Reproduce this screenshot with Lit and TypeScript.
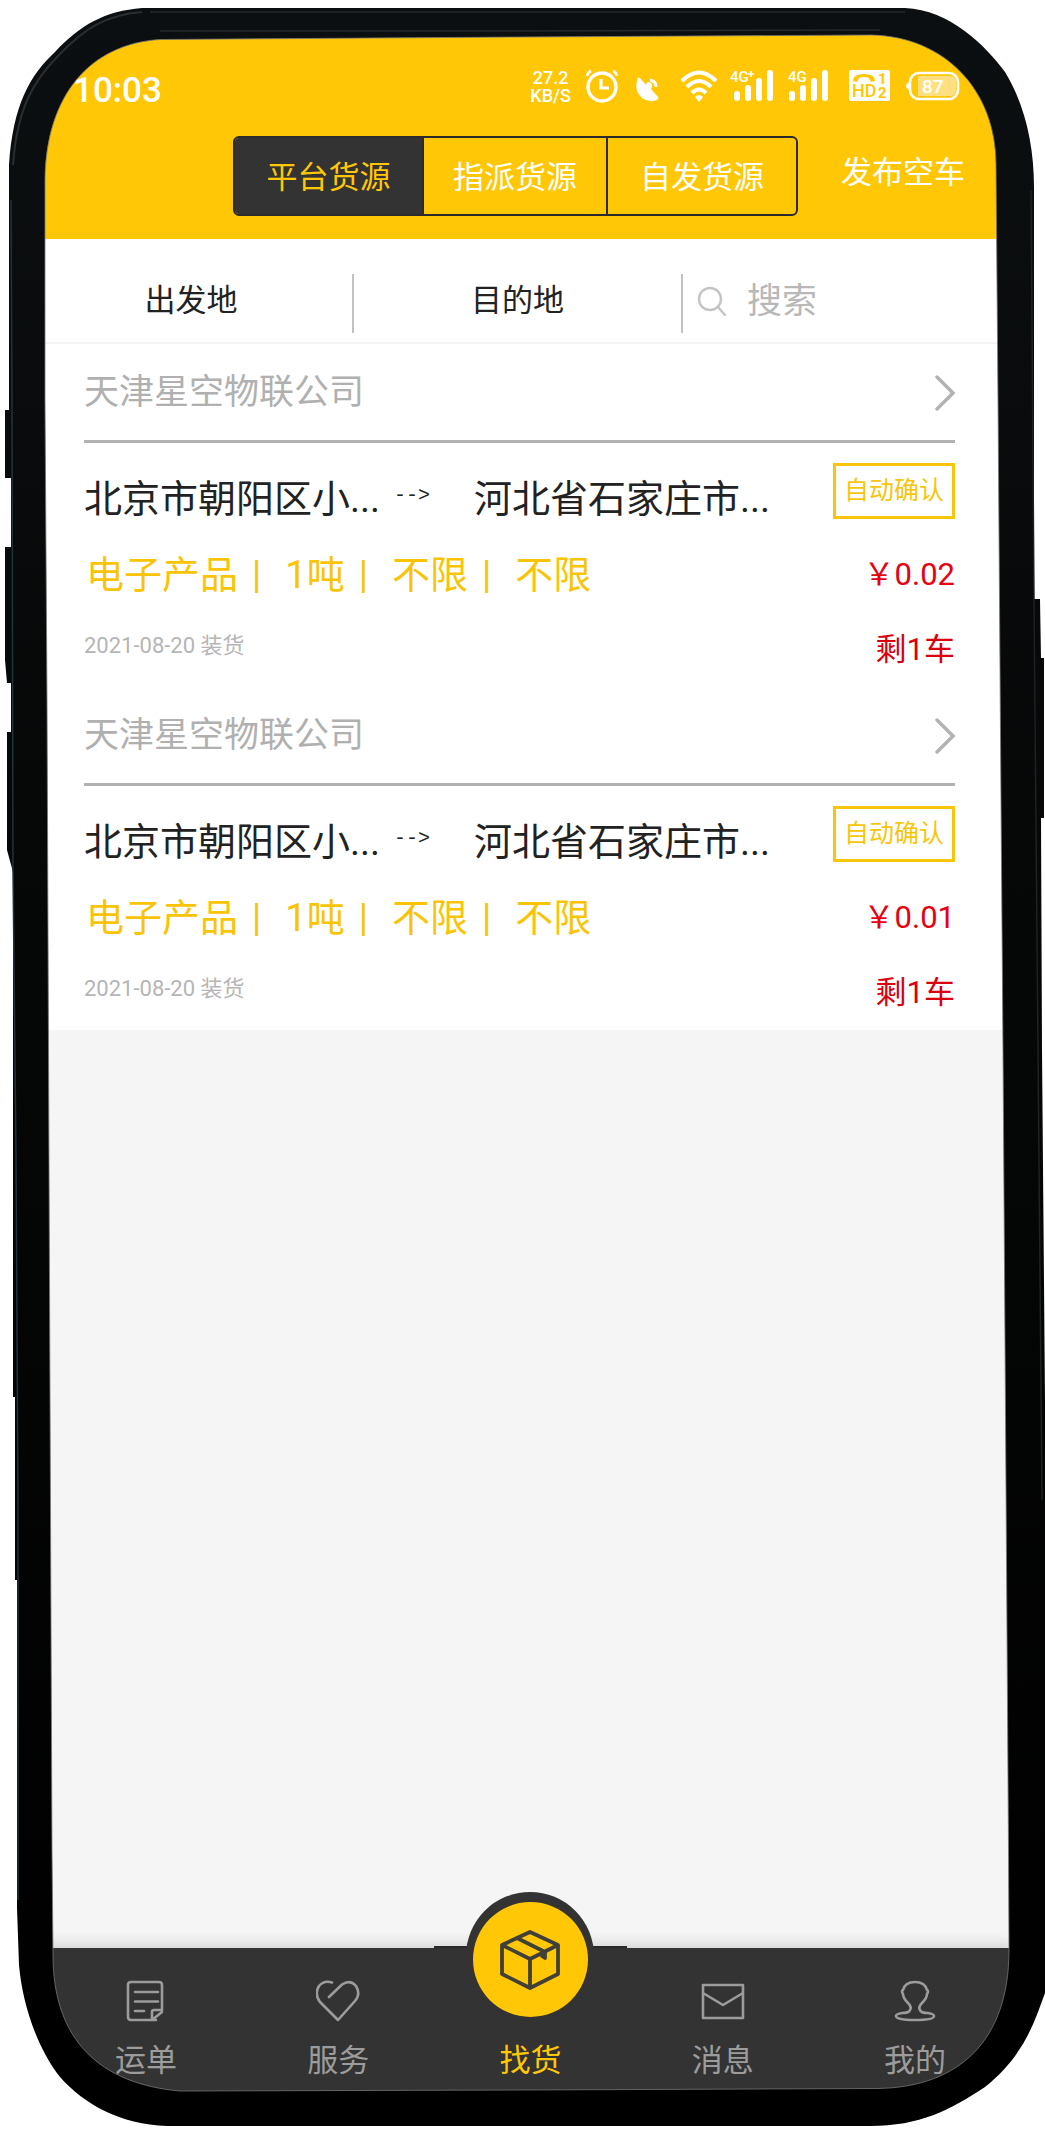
import { LitElement, html, svg, css } from "lit";
import { customElement, state } from "lit/decorators.js";
import { classMap } from "lit/directives/class-map.js";

interface Shipment {
  company: string;
  from: string;
  to: string;
  tag: string;
  specs: string[];
  date: string;
  price: string;
  left: string;
}

const SHIPMENTS: Shipment[] = [
  {
    company: "天津星空物联公司",
    from: "北京市朝阳区小...",
    to: "河北省石家庄市...",
    tag: "自动确认",
    specs: ["电子产品", "1吨", "不限", "不限"],
    date: "2021-08-20 装货",
    price: "￥0.02",
    left: "剩1车",
  },
  {
    company: "天津星空物联公司",
    from: "北京市朝阳区小...",
    to: "河北省石家庄市...",
    tag: "自动确认",
    specs: ["电子产品", "1吨", "不限", "不限"],
    date: "2021-08-20 装货",
    price: "￥0.01",
    left: "剩1车",
  },
];

const SOURCES = ["平台货源", "指派货源", "自发货源"];

const FONT = css`Roboto, "Noto Sans CJK SC", sans-serif`;

@customElement("status-bar")
export class StatusBar extends LitElement {
  static styles = css`
    :host {
      display: flex;
      align-items: center;
      justify-content: space-between;
      height: 60px;
      padding: 0 55px 0 33px;
      color: #fff;
      font-family: ${FONT};
    }
    .time {
      font-size: 35px;
      line-height: 42px;
      font-weight: 500;
      padding-top: 10px;
    }
    .icons {
      display: flex;
      align-items: center;
      gap: 12px;
    }
    .speed {
      display: flex;
      flex-direction: column;
      align-items: center;
      font-size: 18px;
      line-height: 18px;
      font-weight: 500;
      padding: 2px 3px 0 0;
    }
    svg {
      display: block;
    }
    .net {
      font-size: 15px;
      font-weight: 500;
    }
    .hd {
      font-size: 18px;
      font-weight: 500;
    }
    .sim {
      font-size: 15px;
      font-weight: 700;
    }
    .charge {
      font-size: 19px;
      font-weight: 500;
    }
  `;

  render() {
    return html`
      <span class="time">10:03</span>
      <div class="icons">
        <span class="speed"><span>27.2</span><span>KB/S</span></span>
        <svg width="36" height="34" viewBox="0 0 36 34" fill="none" stroke="#fff" aria-hidden="true">
          <circle cx="16" cy="18" r="14" stroke-width="3.4" />
          <path d="M15 10v9h8" stroke-width="3.2" />
          <path d="M1 7Q2 3 5 2M27 2q3 1 4 5" stroke-width="2.6" />
        </svg>
        <svg width="34" height="34" viewBox="0 0 34 34" fill="#fff" aria-hidden="true">
          <path d="M4 9q1-1 2 0l6 7q0-3 3-3 4 1 3 5l-1 2 7 8q1 2-1 3-8 3-15-2Q-1 21 4 9z" />
          <path d="M16 11q6 1 6 7" fill="none" stroke="#fff" stroke-width="3" />
        </svg>
        <svg width="38" height="34" viewBox="0 0 38 34" fill="none" stroke="#fff" stroke-width="4" aria-hidden="true">
          <path d="M2 12Q19-5 36 12" />
          <path d="M7 18Q19 6 31 18" />
          <path d="M12 24Q19 17 26 24" />
          <path d="M15 28q4-4 8 0l-4 5z" fill="#fff" stroke="none" />
        </svg>
        <svg width="46" height="34" viewBox="0 0 46 34" fill="#fff" aria-hidden="true">
          <text class="net" x="0" y="13">4G</text>
          <path d="M21 2v6M18 5h6" stroke="#fff" stroke-width="1.6" />
          <rect x="4" y="22" width="6" height="10" rx="3" />
          <rect x="15" y="16" width="6" height="16" rx="3" />
          <rect x="26" y="9" width="6" height="23" rx="3" />
          <rect x="37" y="1" width="6" height="31" rx="3" />
        </svg>
        <svg width="49" height="34" viewBox="0 0 49 34" fill="#fff" aria-hidden="true">
          <text class="net" x="0" y="13">4G</text>
          <rect x="1" y="22" width="6" height="10" rx="3" />
          <rect x="12" y="16" width="6" height="16" rx="3" />
          <rect x="23" y="9" width="6" height="23" rx="3" />
          <rect x="34" y="1" width="6" height="31" rx="3" />
        </svg>
        <svg width="45" height="34" viewBox="0 0 45 34" fill="#ffc706" aria-hidden="true">
          <rect x="0" y="1" width="41" height="31" rx="2" fill="#fff" />
          <path d="M4 12q0-7 11-7t11 7l-4 1-2-4q-5-2-10 0l-2 4z" />
          <text class="hd" x="3" y="28">HD</text>
          <text class="sim" x="29" y="15">1</text>
          <text class="sim" x="29" y="29">2</text>
        </svg>
        <svg width="54" height="34" viewBox="0 0 54 34" aria-hidden="true">
          <path d="M4 12Q0 15 0 17t4 5z" fill="#fff" />
          <rect x="4" y="4" width="48" height="26" rx="9" fill="none" stroke="#fff" stroke-width="2.6" />
          <path d="M12 7h34q4 1 4 6v8q0 5-4 6H12z" fill="#ffdf80" />
          <text class="charge" x="16" y="24" fill="#fff">87</text>
        </svg>
      </div>
    `;
  }
}

@customElement("shipment-card")
export class ShipmentCard extends LitElement {
  static properties = { item: { attribute: false } };
  declare item: Shipment;

  static styles = css`
    :host {
      display: block;
      padding: 0 60px 4px 44px;
      background: #fff;
      font-family: ${FONT};
    }
    .head {
      display: flex;
      align-items: center;
      justify-content: space-between;
      box-sizing: border-box;
      height: 99px;
      padding-top: 2px;
      border-bottom: 3px solid #b2b2b2;
      color: #b0b0b0;
      font-size: 35px;
      line-height: 40px;
      text-decoration: none;
    }
    .row {
      display: flex;
      align-items: center;
      justify-content: space-between;
    }
    .route {
      height: 72px;
      margin-top: 20px;
      color: #222;
    }
    .places {
      display: flex;
      align-items: center;
      font-size: 38px;
      line-height: 44px;
      white-space: nowrap;
    }
    .arrow {
      font-family: "Liberation Mono", monospace;
      font-size: 20px;
      line-height: 24px;
      padding: 0 44px 6px 14px;
    }
    .tag {
      align-self: flex-start;
      box-sizing: border-box;
      height: 56px;
      padding: 0 8px;
      border: 3px solid #f7c50c;
      color: #f7c50c;
      font-size: 25px;
      line-height: 50px;
    }
    .info {
      height: 82px;
    }
    .specs {
      display: flex;
      color: #f9c406;
      font-size: 38px;
      line-height: 44px;
      margin: 0;
      padding: 0 0 2px 2px;
      list-style: none;
    }
    .spec:not(:last-child)::after {
      content: "|";
      padding: 0 24px 0 14px;
    }
    .price {
      color: #e60012;
      font-size: 31px;
      line-height: 40px;
      padding-bottom: 2px;
    }
    .foot {
      height: 66px;
    }
    .date {
      color: #b5b5b5;
      font-size: 22px;
      line-height: 28px;
      padding-bottom: 8px;
    }
    .left {
      color: #d8000f;
      font-size: 31px;
      line-height: 36px;
    }
  `;

  render() {
    const s = this.item;
    return html`
      <a class="head" href="#detail">
        <span>${s.company}</span>
        <svg width="20" height="36" viewBox="0 0 20 36" fill="none" stroke="#b2b2b2" stroke-width="3.4" stroke-linecap="round" aria-hidden="true">
          <path d="M2 2l16 16L2 34" />
        </svg>
      </a>
      <div class="row route">
        <div class="places">
          <span>${s.from}</span><span class="arrow">--&gt;</span><span>${s.to}</span>
        </div>
        <span class="tag">${s.tag}</span>
      </div>
      <div class="row info">
        <ul class="specs">
          ${s.specs.map((x) => html`<li class="spec">${x}</li>`)}
        </ul>
        <span class="price">${s.price}</span>
      </div>
      <div class="row foot">
        <span class="date">${s.date}</span>
        <span class="left">${s.left}</span>
      </div>
    `;
  }
}

const TAB_ICONS = {
  orders: svg`<path d="M32 40H7q-3 0-3-3V5q0-3 3-3h28q3 0 3 3v25h-8q-2 0-2 2v8l10-8M11 12h23M11 21.500h23M11 31h9" />`,
  service: svg`<path d="M13 17L26 4.500Q34-1 40 6q5 8-1 15L22 40 4 22Q-2 14 3 6 8 0 16 2.500" />`,
  messages: svg`<path d="M2 5h40v33H2zM2 13l20 12 20-12" />`,
  mine: svg`<path d="M17 30q2-3-2-7-5-5-5-9-2-3 0-4Q12 2 22 2t12 8q2 1 0 4 0 4-5 9-4 4-2 7 1 3 8 3 6 1 6 3 0 4-19 4T3 36q0-2 6-3 7 0 8-3z" />`,
};

@customElement("tab-bar")
export class TabBar extends LitElement {
  static styles = css`
    :host {
      display: block;
      background: #333;
      box-shadow: 0 -3px 14px rgba(0, 0, 0, 0.16);
      font-family: ${FONT};
    }
    .tabs {
      display: grid;
      grid-template-columns: repeat(5, 1fr);
      grid-template-rows: 148px;
      padding: 0 4px 0 10px;
    }
    .tab {
      display: flex;
      flex-direction: column;
      align-items: center;
      justify-content: flex-end;
      gap: 20px;
      min-height: 0;
      padding-bottom: 17px;
      box-sizing: border-box;
      color: #9c9c9c;
      font-size: 31px;
      line-height: 36px;
      text-decoration: none;
    }
    .main {
      position: relative;
      gap: 23px;
      color: #ffc706;
    }
    .main::before {
      content: "";
      position: absolute;
      top: -2px;
      left: 0;
      right: 0;
      height: 2px;
      background: #2a2a2a;
    }
    .bump {
      position: relative;
      display: flex;
      flex: none;
      justify-content: center;
      box-sizing: border-box;
      width: 128px;
      height: 128px;
      padding-top: 10px;
      border-radius: 50%;
      background: #333;
    }
    .disc {
      display: flex;
      align-items: center;
      justify-content: center;
      width: 115px;
      height: 115px;
      border-radius: 50%;
      background: #ffc706;
    }
  `;

  private tab(label: string, icon: unknown) {
    return html`<a class="tab" href="#tab">
      <svg width="44" height="44" viewBox="0 0 44 42" fill="none" stroke="#9c9c9c" stroke-width="2.600" stroke-linecap="round" stroke-linejoin="round" aria-hidden="true">${icon}</svg>
      <span>${label}</span>
    </a>`;
  }

  render() {
    return html`
      <nav class="tabs">
        ${this.tab("运单", TAB_ICONS.orders)} ${this.tab("服务", TAB_ICONS.service)}
        <a class="tab main" href="#tab" aria-current="page">
          <span class="bump"
            ><span class="disc">
              <svg width="60" height="60" viewBox="0 0 60 60" fill="none" stroke="#404038" stroke-width="3.800" stroke-linejoin="round" aria-hidden="true">
                <path d="M30 2l28 13v29L30 58 2 44V15zM2 15l28 14 28-14M30 29v29M17 8l28 14v6l-3-2v-3" />
              </svg> </span
          ></span>
          <span>找货</span>
        </a>
        ${this.tab("消息", TAB_ICONS.messages)} ${this.tab("我的", TAB_ICONS.mine)}
      </nav>
    `;
  }
}

@customElement("app-root")
export class AppRoot extends LitElement {
  @state() private source = 0;

  static styles = css`
    :host {
      display: flex;
      position: relative;
      box-sizing: border-box;
      min-height: 100vh;
      padding: 30px 30px 34px 40px;
      background: #fff;
      font-family: ${FONT};
    }
    .screen {
      display: flex;
      flex-direction: column;
      flex: 1;
      min-width: 0;
      border-radius: 110px;
      overflow: hidden;
      background: #f5f5f5;
    }
    .bezel {
      position: absolute;
      inset: 0;
      width: 100%;
      height: 100%;
      pointer-events: none;
    }
    .header {
      background: #ffc706;
      padding: 26px 0 23px;
    }
    .bar {
      display: flex;
      justify-content: flex-end;
      gap: 43px;
      margin-top: 20px;
      padding-right: 50px;
    }
    .sources {
      display: grid;
      grid-template-columns: 187px 184px 190px;
      height: 80px;
      box-sizing: border-box;
      border: 2px solid #2b2b2b;
      border-radius: 6px;
      overflow: hidden;
    }
    button {
      border: 0;
      background: none;
      font: inherit;
      padding: 0;
      color: inherit;
    }
    .source {
      color: #fff;
      font-size: 31px;
      line-height: 36px;
      padding-top: 4px;
    }
    .source + .source {
      border-left: 2px solid #2b2b2b;
    }
    .source.on {
      background: #333;
      color: #ffc706;
    }
    .publish {
      color: #fff;
      font-size: 31px;
      line-height: 36px;
      padding-bottom: 6px;
    }
    .filters {
      display: grid;
      grid-template-columns: 312fr 2px 327fr 2px 332fr;
      align-items: center;
      height: 83px;
      padding-top: 20px;
      background: #fff;
      border-bottom: 2px solid #f4f4f4;
    }
    .filter {
      color: #222;
      font-size: 31px;
      line-height: 36px;
    }
    .filter:first-child {
      padding-right: 10px;
    }
    .rule {
      height: 59px;
      background: #c2c2c2;
      margin-top: 6px;
    }
    .search {
      display: flex;
      align-items: center;
      gap: 20px;
      padding-left: 14px;
      min-width: 0;
    }
    .query {
      flex: 1;
      min-width: 0;
      border: 0;
      padding: 2px 0 0;
      background: none;
      font: inherit;
      font-size: 35px;
      line-height: 42px;
      color: #222;
      outline: none;
    }
    .query::placeholder {
      color: #b8b8b8;
      opacity: 1;
    }
    .list {
      flex: 1;
    }
  `;

  render() {
    return html`
      <main class="screen">
        <header class="header">
          <status-bar></status-bar>
          <div class="bar">
            <div class="sources">
              ${SOURCES.map(
                (name, i) => html`<button
                  class=${classMap({ source: true, on: this.source === i })}
                  aria-pressed=${this.source === i}
                  @click=${() => (this.source = i)}
                >
                  ${name}
                </button>`
              )}
            </div>
            <button class="publish">发布空车</button>
          </div>
        </header>
        <div class="filters">
          <button class="filter">出发地</button>
          <span class="rule"></span>
          <button class="filter">目的地</button>
          <span class="rule"></span>
          <label class="search">
            <svg width="30" height="30" viewBox="0 0 30 30" fill="none" stroke="#c4c4c4" stroke-width="2.400" stroke-linecap="round" aria-hidden="true">
              <circle cx="13" cy="13" r="11" />
              <path d="M21 21l7 8" />
            </svg>
            <input class="query" type="search" placeholder="搜索" aria-label="搜索" />
          </label>
        </div>
        <section class="list">
          ${SHIPMENTS.map((s) => html`<shipment-card .item=${s}></shipment-card>`)}
        </section>
        <tab-bar></tab-bar>
      </main>
      ${this.bezel()}
    `;
  }

  private bezel() {
    const hole =
      "M160 39.500L522 37 872 35C945 37 996 90 996 165L998 400 1001 800 1003 1050 1008.500 1850 1009 1950C1009 2040 960 2087 878 2088.500L522 2090 180 2091C100 2084 53 2040 53 1955L52 1850 48.500 1050 47 700 45 400V180C46 95 90 44 160 39.500Z";
    return html`
      <svg class="bezel" viewBox="0 0 1045 2130" preserveAspectRatio="none" aria-hidden="true">
        <defs>
          <linearGradient id="body" x1="0" y1="0" x2="0" y2="1">
            <stop offset="0" stop-color="#0c0f11" />
            <stop offset="0.400" stop-color="#060707" />
            <stop offset="1" stop-color="#000" />
          </linearGradient>
        </defs>
        <path
          fill="url(#body)"
          fill-rule="evenodd"
          d="M142 8H905C950 10 985 45 1005 72 1025 105 1034 145 1034 187V599H1040L1041 658H1044V818H1041L1042 1050 1045 1400V1993C1035 2020 1025 2055 985 2087 950 2110 920 2126 870 2126H167C120 2124 85 2105 60 2077 35 2045 22 2000 19 1965L17 1908V1580H15V1397H13V872L7 850V732H11V683H7L5 660V547H11V478H5V410H9V165C13 105 30 75 55 52 80 25 105 11 142 8Z ${hole}"
        />
        <path d="M11 200L12 400 13 870 16 1154 18 1500V1900" fill="none" stroke="#22323b" stroke-width="1.500" />
        <path d="M142 12C105 15 84 29 59 55 34 80 17 108 13 165" fill="none" stroke="#2b2e30" stroke-width="2" />
        <path d="M150 12H905M160 31L522 31 880 30" fill="none" stroke="#26292b" stroke-width="1.500" />
        <path d="M1031 190L1034 600 1038 1050 1042 1500" fill="none" stroke="#1d2225" stroke-width="1.500" />
        <path d=${hole} fill="none" stroke="#777" stroke-width="1" opacity="0.800" />
      </svg>
    `;
  }
}
